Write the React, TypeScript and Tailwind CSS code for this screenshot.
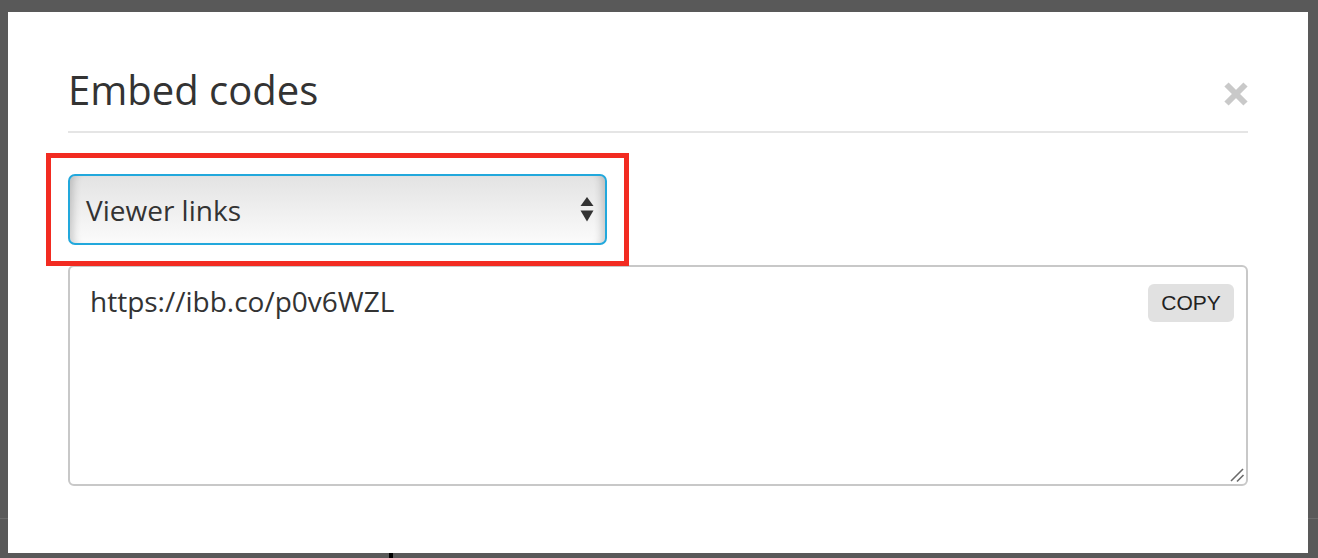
import React from 'react';

const openSans = { fontFamily: '"Open Sans", "Noto Sans", sans-serif' };

function CloseIcon() {
  return (
    <svg width="24" height="24" viewBox="0 0 24 24" aria-hidden="true" className="mt-[14px] shrink-0">
      <line x1="2.5" y1="2.5" x2="21.5" y2="21.5" stroke="#c9c9c9" strokeWidth="6" />
      <line x1="21.5" y1="2.5" x2="2.5" y2="21.5" stroke="#c9c9c9" strokeWidth="6" />
    </svg>
  );
}

function SelectArrows() {
  return (
    <svg width="14" height="26" viewBox="0 0 14 26" aria-hidden="true" className="shrink-0">
      <polygon points="7,0 13.5,9 0.5,9" fill="#333" />
      <polygon points="0.5,13.5 13.5,13.5 7,24.5" fill="#333" />
    </svg>
  );
}

function ResizeGrip() {
  return (
    <svg width="16" height="16" viewBox="0 0 16 16" aria-hidden="true" className="absolute bottom-[1px] right-[1px]">
      <line x1="2" y1="14" x2="14" y2="2" stroke="#6a6a6a" strokeWidth="1.6" />
      <line x1="8" y1="14.5" x2="14.5" y2="8" stroke="#6a6a6a" strokeWidth="1.6" />
    </svg>
  );
}

export default function App() {
  return (
    <div className="relative h-[558px] w-[1318px] overflow-hidden bg-[#595959] pl-[8px] pt-[12px]" style={openSans}>
      {/* page underneath the overlay */}
      <div className="absolute left-0 top-[518px] h-px w-full bg-[#6b6b6b]" />
      <div className="absolute left-[389px] top-[553px] h-[5px] w-[4px] bg-black" />

      {/* modal */}
      <div className="relative flex h-[541px] w-[1300px] flex-col bg-white px-[60px] pt-[56px]">
        <div className="flex items-start justify-between border-b-2 border-[#e5e5e5] pb-[19px]">
          <h2 className="text-[40px] font-normal leading-[44px] text-[#333]">Embed codes</h2>
          <CloseIcon />
        </div>

        <div className="mt-[41px] flex h-[71px] w-[539px] items-center justify-between rounded-[7px] border-2 border-[#22a8dc] bg-linear-to-b from-[#e3e3e3] to-[#fbfbfb] pl-[16px] pr-[11px] shadow-[inset_10px_0_8px_-7px_rgba(0,0,0,0.2),inset_-10px_0_8px_-7px_rgba(0,0,0,0.2)]">
          <span className="text-[28px] leading-[38px] text-[#333]">Viewer links</span>
          <SelectArrows />
        </div>

        <div className="relative mt-[20px] flex h-[221px] w-[1180px] items-start justify-between rounded-[6px] border-2 border-[#c8c8c8] pl-[20px] pr-[12px] pt-[15px]">
          <p className="text-[28px] leading-[38px] text-[#333]">https://ibb.co/p0v6WZL</p>
          <button
            type="button"
            className="mt-[2px] flex h-[38px] w-[86px] items-center justify-center rounded-[6px] bg-[#e1e1e1] text-[21px] text-[#222]"
            style={{ fontFamily: '"Liberation Sans", Arial, sans-serif' }}
          >
            COPY
          </button>
          <ResizeGrip />
        </div>

        {/* annotation frame drawn over the select */}
        <div className="absolute left-[38px] top-[141px] h-[113px] w-[583px] border-[5px] border-[#f22b21]" />
      </div>
    </div>
  );
}
